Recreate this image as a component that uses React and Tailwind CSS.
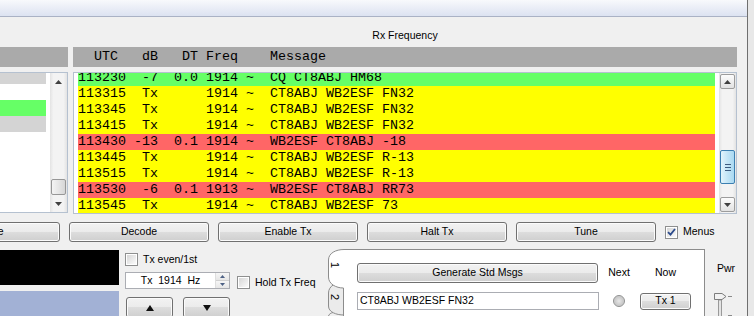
import React from "react";

const rows = [
  ["113230", "-7", "0.0", "1914", "CQ CT8ABJ HM68", "g"],
  ["113315", "Tx", "", "1914", "CT8ABJ WB2ESF FN32", "y"],
  ["113345", "Tx", "", "1914", "CT8ABJ WB2ESF FN32", "y"],
  ["113415", "Tx", "", "1914", "CT8ABJ WB2ESF FN32", "y"],
  ["113430", "-13", "0.1", "1914", "WB2ESF CT8ABJ -18", "r"],
  ["113445", "Tx", "", "1914", "CT8ABJ WB2ESF R-13", "y"],
  ["113515", "Tx", "", "1914", "CT8ABJ WB2ESF R-13", "y"],
  ["113530", "-6", "0.1", "1913", "WB2ESF CT8ABJ RR73", "r"],
  ["113545", "Tx", "", "1914", "CT8ABJ WB2ESF 73", "y"],
];

const rowBg = { g: "bg-[#66ff66]", y: "bg-[#ffff00]", r: "bg-[#ff6666]" };

const fmt = (r) => `${r[0]} ${r[1].padStart(3)} ${r[2].padStart(4)} ${r[3]} ~  ${r[4]}`;

function Arrow({ dir }) {
  return (
    <svg width="7" height="4" viewBox="0 0 7 4">
      <path d={dir === "up" ? "M0 4L3.5 0L7 4Z" : "M0 0L3.5 4L7 0Z"} fill="#404040" />
    </svg>
  );
}

function ScrollBtn({ dir, hover }) {
  return (
    <div className="h-[17px] flex items-center justify-center">
      {hover ? (
        <div className="w-[15px] h-[15px] rounded-[2px] border border-[#9c9c9c] bg-[linear-gradient(#fcfcfc,#e2e2e2)] flex items-center justify-center">
          <Arrow dir={dir} />
        </div>
      ) : (
        <Arrow dir={dir} />
      )}
    </div>
  );
}

function ScrollBar({ hover }) {
  return (
    <div className="w-[17px] h-full shrink-0 flex flex-col bg-[linear-gradient(90deg,#e3e3e3,#f3f3f3_20%,#f3f3f3_80%,#e3e3e3)]">
      <ScrollBtn dir="up" hover={hover} />
      <div className="flex-1 flex flex-col items-center">
        {hover ? (
          <div className="mt-[60px] h-[34px] w-[15px] rounded-[2px] border border-[#3c7fb1] bg-[linear-gradient(90deg,#e3f4fc,#c4e5f6_50%,#a9d9f2)] flex flex-col items-center justify-center gap-[2px]">
            <div className="w-[6px] h-px bg-[#3d5b7f]" />
            <div className="w-[6px] h-px bg-[#3d5b7f]" />
            <div className="w-[6px] h-px bg-[#3d5b7f]" />
          </div>
        ) : (
          <div className="mt-[89px] h-[16px] w-[15px] rounded-[2px] border border-[#979797] bg-[linear-gradient(90deg,#f4f4f4,#e6e6e6_50%,#d6d6d6)]" />
        )}
      </div>
      <ScrollBtn dir="down" hover={hover} />
    </div>
  );
}

function Btn({ children, className = "" }) {
  return (
    <div
      className={`flex items-center justify-center shrink-0 rounded-[3px] border border-[#707070] bg-[linear-gradient(#f2f2f2,#ebebeb_50%,#dddddd_50%,#cfcfcf)] shadow-[inset_0_0_0_1px_#fbfbfb] ${className}`}
    >
      {children}
    </div>
  );
}

function Check({ checked }) {
  return (
    <div className="w-[13px] h-[13px] shrink-0 border border-[#8e8f8f] bg-white p-px">
      <div className="w-full h-full bg-[linear-gradient(135deg,#d6d6d6,#fbfbfb)] flex items-center justify-center">
        {checked && (
          <svg width="9" height="8" viewBox="0 0 9 8">
            <path d="M1 4.2L3.5 6.6L8 1" stroke="#2c4b8c" strokeWidth="1.8" fill="none" />
          </svg>
        )}
      </div>
    </div>
  );
}

function Tri({ up }) {
  return (
    <svg width="8" height="6" viewBox="0 0 8 6">
      <path d={up ? "M0 6L4 0L8 6Z" : "M0 0L4 6L8 0Z"} fill="#111" />
    </svg>
  );
}

export default function App() {
  return (
    <div className="w-[754px] h-[316px] overflow-hidden flex bg-[#f0f0f0] text-black text-[10.5px] font-['Liberation_Sans',Arial,sans-serif]">
      <div className="w-[747px] shrink-0 flex flex-col">
        <div className="h-[17px] border-b border-[#aab2c5] bg-[linear-gradient(#f8f9fc,#dce2f1)]" />

        <div className="h-[197px] flex gap-[5px]">
          <div className="w-[68px] flex flex-col pt-[30px]">
            <div className="h-[20px] bg-[#aaaaaa]" />
            <div className="mt-[5px] h-[141px] border-y border-r border-[#b5c1d0] bg-white flex overflow-hidden">
              <div className="w-[46px] -mt-[5px] flex flex-col">
                <div className="h-[16px] bg-[#d4d4d4]" />
                <div className="h-[16px]" />
                <div className="h-[16px] bg-[#66ff66]" />
                <div className="h-[16px] bg-[#d4d4d4]" />
              </div>
              <div className="ml-auto h-full">
                <ScrollBar />
              </div>
            </div>
          </div>

          <div className="w-[664px] flex flex-col">
            <div className="h-[30px] pt-[10px] leading-[16px] text-center">Rx Frequency</div>
            <div className="h-[20px] bg-[#aaaaaa] pl-[5px] leading-[20px] whitespace-pre font-['Liberation_Mono',monospace] text-[13.33px]">
              {"  UTC   dB   DT Freq    Message"}
            </div>
            <div className="mt-[5px] h-[142px] border border-[#b5c1d0] bg-white flex overflow-hidden">
              <div className="w-[641px] pl-[4px] -mt-[3px] flex flex-col font-['Liberation_Mono',monospace] text-[13.33px]">
                {rows.map((r) => (
                  <div key={r[0]} className={`h-[16px] leading-[16px] whitespace-pre ${rowBg[r[5]]}`}>
                    {fmt(r)}
                  </div>
                ))}
              </div>
              <div className="ml-auto h-full">
                <ScrollBar hover />
              </div>
            </div>
          </div>
        </div>

        <div className="mt-[8px] h-[20px] flex items-center gap-[9px]">
          <Btn className="-ml-[80px] w-[140px] h-[20px]">Erase</Btn>
          <Btn className="w-[140px] h-[20px]">Decode</Btn>
          <Btn className="w-[140px] h-[20px]">Enable Tx</Btn>
          <Btn className="w-[140px] h-[20px]">Halt Tx</Btn>
          <Btn className="w-[140px] h-[20px]">Tune</Btn>
          <div className="flex items-center gap-[5px]">
            <Check checked />
            <span>Menus</span>
          </div>
        </div>

        <div className="mt-[7px] h-[67px] flex items-start">
          <div className="w-[119px] mt-[1px] flex flex-col">
            <div className="h-[35px] bg-black" />
            <div className="mt-[6px] h-[30px] bg-[#a2b1d5]" />
          </div>

          <div className="ml-[6px] w-[105px] flex flex-col">
            <div className="mt-[4px] h-[13px] flex items-center gap-[5px]">
              <Check />
              <span>Tx even/1st</span>
            </div>
            <div className="mt-[6px] h-[17px] border border-[#abadb3] bg-white flex">
              <div className="flex-1 flex items-center justify-center whitespace-pre">{"Tx  1914  Hz"}</div>
              <div className="w-[14px] flex flex-col border-l border-[#dedede]">
                <div className="flex-1 flex items-center justify-center bg-[linear-gradient(#f6f6f6,#e6e6e6)] border-b border-[#d0d0d0]">
                  <svg width="5" height="3" viewBox="0 0 5 3"><path d="M0 3L2.5 0L5 3Z" fill="#4d6185" /></svg>
                </div>
                <div className="flex-1 flex items-center justify-center bg-[linear-gradient(#f6f6f6,#e6e6e6)]">
                  <svg width="5" height="3" viewBox="0 0 5 3"><path d="M0 0L2.5 3L5 0Z" fill="#4d6185" /></svg>
                </div>
              </div>
            </div>
            <div className="mt-[8px] pl-px flex gap-[10px]">
              <Btn className="w-[47px] h-[21px]"><Tri up /></Btn>
              <Btn className="w-[47px] h-[21px]"><Tri /></Btn>
            </div>
          </div>

          <div className="ml-[7px] mt-[26px] w-[90px] flex items-center gap-[5px]">
            <Check />
            <span>Hold Tx Freq</span>
          </div>

          <svg width="17" height="67" viewBox="0 0 17 67" className="shrink-0">
            <path d="M17 33C9 33 1.5 37 1.5 44L1.5 57C1.5 63 9 66 17 66L17 67L17 33Z" fill="#ebebeb" />
            <path d="M17 33C9 33 1.5 37 1.5 44L1.5 57C1.5 63 9 66 17 66" fill="none" stroke="#8c8c8c" />
            <path d="M1.5 67C2 65 4 64 6 63.5" fill="none" stroke="#8c8c8c" />
            <path d="M17 0.5C9 0.5 1.5 4 1.5 11L1.5 28C1.5 35 9 39 17 39Z" fill="#ffffff" />
            <path d="M17 0.5C9 0.5 1.5 4 1.5 11L1.5 28C1.5 35 9 39 16.5 39L16.5 67" fill="none" stroke="#8c8c8c" />
            <text transform="translate(4,16) rotate(90)" fontSize="11" textAnchor="middle" fontFamily="Liberation Sans, Arial, sans-serif" fill="#000">1</text>
            <text transform="translate(4,48) rotate(90)" fontSize="11" textAnchor="middle" fontFamily="Liberation Sans, Arial, sans-serif" fill="#000">2</text>
          </svg>

          <div className="w-[361px] h-[70px] shrink-0 bg-white border-t border-r border-[#8c8c8c] pl-[13px] pt-[13px]">
            <div className="grid grid-cols-[241px_42px_51px] items-center">
              <Btn className="h-[20px]">Generate Std Msgs</Btn>
              <div className="text-center">Next</div>
              <div className="text-center">Now</div>
            </div>
            <div className="mt-[9px] grid grid-cols-[241px_42px_51px] items-center">
              <div className="w-[242px] h-[18px] border border-[#abadb3] bg-white flex items-center pl-[2px]">
                CT8ABJ WB2ESF FN32
              </div>
              <div className="flex justify-center">
                <div className="w-[12px] h-[12px] rounded-full border border-[#8e8f8f] bg-[radial-gradient(circle_at_50%_50%,#e8e8e8,#c9c9c9_60%,#f4f4f4)]" />
              </div>
              <Btn className="h-[17px]">Tx 1</Btn>
            </div>
          </div>

          <div className="ml-[8px] pt-[12px] flex flex-col">
            <div className="pl-[4px] leading-[14px]">Pwr</div>
            <svg width="24" height="24" viewBox="0 0 24 24" className="mt-[18px]">
              <rect x="5.5" y="7" width="3" height="20" fill="#e4e4e4" stroke="#9a9a9a" />
              <path d="M1.5 0.5L9 0.5L13 3.5L9 6.5L1.5 6.5Z" fill="#f2f2f2" stroke="#7d7d7d" strokeLinejoin="round" />
              <line x1="15" y1="3.5" x2="19" y2="3.5" stroke="#8a8a8a" />
              <line x1="15" y1="22.5" x2="19" y2="22.5" stroke="#8a8a8a" />
            </svg>
          </div>
        </div>
      </div>
      <div className="w-px shrink-0 bg-[#6f6f6f]" />
      <div className="flex-1 bg-[#e8e8e8]" />
    </div>
  );
}
